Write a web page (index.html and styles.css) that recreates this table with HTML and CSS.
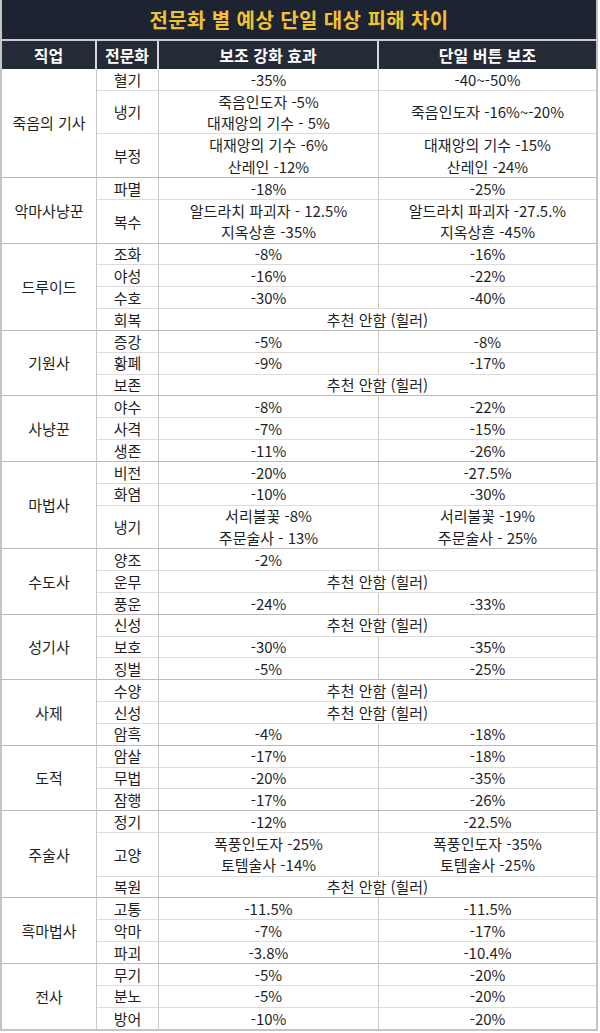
FILE: index.html
```html
<!DOCTYPE html>
<html lang="ko">
<head>
<meta charset="utf-8">
<title>전문화 별 예상 단일 대상 피해 차이</title>
<link rel="stylesheet" href="styles.css">
</head>
<body>
<div class="sheet">
  <div class="title">전문화 별 예상 단일 대상 피해 차이</div>
  <div class="head">
    <div class="hc">직업</div>
    <div class="hc">전문화</div>
    <div class="hc">보조 강화 효과</div>
    <div class="hc last">단일 버튼 보조</div>
  </div>
  <div class="grid">
    <div class="cls s5">죽음의 기사</div>
    <div class="c">혈기</div><div class="c">-35%</div><div class="c e">-40~-50%</div>
    <div class="c d">냉기</div><div class="c d">죽음인도자 -5%<br>대재앙의 기수 - 5%</div><div class="c d e">죽음인도자 -16%~-20%</div>
    <div class="c d g">부정</div><div class="c d g">대재앙의 기수 -6%<br>산레인 -12%</div><div class="c d g e">대재앙의 기수 -15%<br>산레인 -24%</div>

    <div class="cls s3">악마사냥꾼</div>
    <div class="c">파멸</div><div class="c">-18%</div><div class="c e">-25%</div>
    <div class="c d g">복수</div><div class="c d g">알드라치 파괴자 - 12.5%<br>지옥상흔 -35%</div><div class="c d g e">알드라치 파괴자 -27.5.%<br>지옥상흔 -45%</div>

    <div class="cls s4">드루이드</div>
    <div class="c">조화</div><div class="c">-8%</div><div class="c e">-16%</div>
    <div class="c">야성</div><div class="c">-16%</div><div class="c e">-22%</div>
    <div class="c">수호</div><div class="c">-30%</div><div class="c e">-40%</div>
    <div class="c g">회복</div><div class="c g w e">추천 안함 (힐러)</div>

    <div class="cls s3">기원사</div>
    <div class="c">증강</div><div class="c">-5%</div><div class="c e">-8%</div>
    <div class="c">황폐</div><div class="c">-9%</div><div class="c e">-17%</div>
    <div class="c g">보존</div><div class="c g w e">추천 안함 (힐러)</div>

    <div class="cls s3">사냥꾼</div>
    <div class="c">야수</div><div class="c">-8%</div><div class="c e">-22%</div>
    <div class="c">사격</div><div class="c">-7%</div><div class="c e">-15%</div>
    <div class="c g">생존</div><div class="c g">-11%</div><div class="c g e">-26%</div>

    <div class="cls s4">마법사</div>
    <div class="c">비전</div><div class="c">-20%</div><div class="c e">-27.5%</div>
    <div class="c">화염</div><div class="c">-10%</div><div class="c e">-30%</div>
    <div class="c d g">냉기</div><div class="c d g">서리불꽃 -8%<br>주문술사 - 13%</div><div class="c d g e">서리불꽃 -19%<br>주문술사 - 25%</div>

    <div class="cls s3">수도사</div>
    <div class="c">양조</div><div class="c">-2%</div><div class="c e"></div>
    <div class="c">운무</div><div class="c w e">추천 안함 (힐러)</div>
    <div class="c g">풍운</div><div class="c g">-24%</div><div class="c g e">-33%</div>

    <div class="cls s3">성기사</div>
    <div class="c">신성</div><div class="c w e">추천 안함 (힐러)</div>
    <div class="c">보호</div><div class="c">-30%</div><div class="c e">-35%</div>
    <div class="c g">징벌</div><div class="c g">-5%</div><div class="c g e">-25%</div>

    <div class="cls s3">사제</div>
    <div class="c">수양</div><div class="c w e">추천 안함 (힐러)</div>
    <div class="c">신성</div><div class="c w e">추천 안함 (힐러)</div>
    <div class="c g">암흑</div><div class="c g">-4%</div><div class="c g e">-18%</div>

    <div class="cls s3">도적</div>
    <div class="c">암살</div><div class="c">-17%</div><div class="c e">-18%</div>
    <div class="c">무법</div><div class="c">-20%</div><div class="c e">-35%</div>
    <div class="c g">잠행</div><div class="c g">-17%</div><div class="c g e">-26%</div>

    <div class="cls s4">주술사</div>
    <div class="c">정기</div><div class="c">-12%</div><div class="c e">-22.5%</div>
    <div class="c d">고양</div><div class="c d">폭풍인도자 -25%<br>토템술사 -14%</div><div class="c d e">폭풍인도자 -35%<br>토템술사 -25%</div>
    <div class="c g">복원</div><div class="c g w e">추천 안함 (힐러)</div>

    <div class="cls s3">흑마법사</div>
    <div class="c">고통</div><div class="c">-11.5%</div><div class="c e">-11.5%</div>
    <div class="c">악마</div><div class="c">-7%</div><div class="c e">-17%</div>
    <div class="c g">파괴</div><div class="c g">-3.8%</div><div class="c g e">-10.4%</div>

    <div class="cls s3 lastg">전사</div>
    <div class="c">무기</div><div class="c">-5%</div><div class="c e">-20%</div>
    <div class="c">분노</div><div class="c">-5%</div><div class="c e">-20%</div>
    <div class="c g">방어</div><div class="c g">-10%</div><div class="c g e">-20%</div>
  </div>
</div>
</body>
</html>
```

FILE: styles.css
```css
html, body {
  margin: 0;
  padding: 0;
  background: #ffffff;
}

body {
  font-family: "Noto Sans CJK KR", "Noto Sans", sans-serif;
  color: #1f1f1f;
}

.sheet {
  width: 598px;
  box-sizing: border-box;
  border-left: 2px solid #c4c4c4;
  border-right: 2px solid #c4c4c4;
  border-bottom: 2px solid #c4c4c4;
}

.title {
  height: 39px;
  background: #1e2331;
  color: #f1c232;
  font-weight: 700;
  font-size: 20px;
  letter-spacing: 0.4px;
  display: flex;
  align-items: center;
  justify-content: center;
  border-bottom: 2px solid #c9cbcf;
}

.head {
  display: grid;
  grid-template-columns: 95px 62px 220px 1fr;
  height: 28px;
  background: #252a37;
}

.hc {
  color: #ffffff;
  font-weight: 700;
  font-size: 16px;
  display: flex;
  align-items: center;
  justify-content: center;
  border-right: 2px solid #d6d8dc;
}

.hc.last {
  border-right: none;
}

.grid {
  display: grid;
  grid-template-columns: 95px 62px 220px 1fr;
  grid-auto-rows: 21.83px;
  font-size: 15px;
  line-height: 21.6px;
}

.c, .cls {
  box-sizing: border-box;
  display: flex;
  align-items: center;
  justify-content: center;
  text-align: center;
  border-right: 1px solid #c8c8c8;
  border-bottom: 1px solid #dcdcdc;
  white-space: nowrap;
  overflow: hidden;
}

.cls {
  grid-column: 1;
  border-bottom-color: #b9b9b9;
}

.s3 { grid-row: span 3; }
.s4 { grid-row: span 4; }
.s5 { grid-row: span 5; }

.d { grid-row: span 2; }

.w { grid-column: span 2; }

.e { border-right: none; }

.g { border-bottom-color: #b9b9b9; }

.lastg, .grid > .c.g:nth-last-child(-n+3) {
  border-bottom: none;
}
```
